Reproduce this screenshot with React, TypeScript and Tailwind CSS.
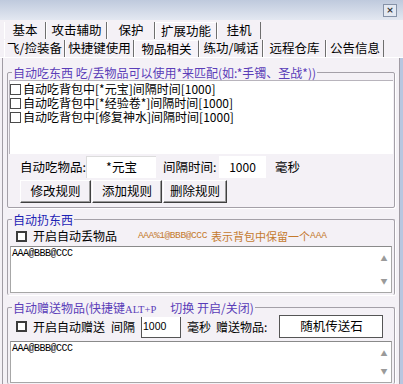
const font = "font-['SimSun','Noto_Sans_CJK_SC',sans-serif]";

type TabProps = { label: string; width: string; active?: boolean };

function Tab({ label, width, active }: TabProps) {
  return (
    <div
      className={`${width} h-full flex items-center justify-center border-l border-l-white border-r border-r-[#6e6e6e] ${
        active ? "bg-[#f6f3f8] -mt-[3px] h-[22px] border-t border-t-white" : ""
      }`}
    >
      <span className="text-[12.5px] leading-none text-black whitespace-nowrap">{label}</span>
    </div>
  );
}

function Check({ label }: { label: string }) {
  return (
    <div className="flex items-center gap-[2px] h-[14px]">
      <span className="w-[11px] h-[11px] border border-[#4a4a4a] bg-white" />
      <span className="text-[12px] leading-none whitespace-nowrap">{label}</span>
    </div>
  );
}

function Box() {
  return <span className="w-[11px] h-[11px] border-2 border-[#3c3c3c] bg-white shrink-0" />;
}

function Btn({ label, width }: { label: string; width: string }) {
  return (
    <button
      className={`${width} h-[23px] bg-[#f4f1f6] border border-t-white border-l-white border-r-[#404040] border-b-[#404040] shadow-[inset_-1px_-1px_0_#9a9a9a] text-[12.5px] leading-none`}
    >
      {label}
    </button>
  );
}

function TextArea({ h }: { h: string }) {
  return (
    <div className={`${h} mx-[2px] bg-white border border-[#a7a7a7] border-t-[#8a8a8a] flex`}>
      <div className="flex-1 px-[1px] pt-[2px] text-[10px] leading-none font-['Liberation_Mono',monospace] tracking-[-0.5px]">
        AAA@BBB@CCC
      </div>
      <div className="w-[14px] flex flex-col justify-between items-center py-[6px] text-[7px] text-[#9a9a9a]">
        <span>▲</span>
        <span>▼</span>
      </div>
    </div>
  );
}

function Group({
  title,
  color,
  className,
  children,
}: {
  title: React.ReactNode;
  color: string;
  className?: string;
  children: React.ReactNode;
}) {
  return (
    <div
      className={`relative mx-[4px] border border-[#a4a0a8] shadow-[1px_1px_0_white] rounded-[2px] ${className ?? ""}`}
    >
      <div
        className={`absolute -top-[8px] left-[4px] bg-[#f4f1f6] px-[1px] text-[12px] leading-[15px] whitespace-nowrap ${color}`}
      >
        {title}
      </div>
      {children}
    </div>
  );
}

export default function App() {
  return (
    <div
      className={`w-[403px] h-[384px] bg-[#f4f1f6] overflow-hidden flex flex-col ${font} text-black`}
    >
      <div className="h-[20px] shrink-0 bg-gradient-to-b from-[#bfcadd] to-[#e3e8f1] flex justify-end items-center pr-[6px]">
        <div className="w-[14px] h-[13px] border border-[#8592a8] bg-[#e4e9f2] flex items-center justify-center text-[9px] leading-none text-[#333] font-bold font-['DejaVu_Sans',sans-serif]">
          ×
        </div>
      </div>

      <div className="h-[19px] shrink-0 flex items-end pl-[4px]">
        <div className="flex h-[17px] items-end">
          <Tab label="基本" width="w-[42px]" />
          <Tab label="攻击辅助" width="w-[61px]" />
          <Tab label="保护" width="w-[48px]" />
          <Tab label="扩展功能" width="w-[62px]" active />
          <Tab label="挂机" width="w-[44px]" />
        </div>
      </div>
      <div className="h-[19px] shrink-0 flex items-end pl-[4px] border-b border-b-white">
        <div className="flex h-[17px] items-end">
          <Tab label="飞/捡装备" width="w-[61px]" />
          <Tab label="快捷键使用" width="w-[69px]" />
          <Tab label="物品相关" width="w-[65px]" active />
          <Tab label="练功/喊话" width="w-[64px]" />
          <Tab label="远程仓库" width="w-[63px]" />
          <Tab label="公告信息" width="w-[58px]" />
        </div>
      </div>

      <div className="flex-1 flex">
        <div className="flex-1 ml-[2px] border-l border-[#a09ca4] border-r pt-[14px] flex flex-col">
          <Group
            title="自动吃东西 吃/丢物品可以使用*来匹配(如:*手镯、圣战*))"
            color="text-[#5a3db8]"
            className="h-[136px]"
          >
            <div className="mt-[7px] mx-[1px] h-[74px] bg-white border-l border-t border-[#b8b4bc] pt-[1px]">
              <Check label="自动吃背包中[*元宝]间隔时间[1000]" />
              <Check label="自动吃背包中[*经验卷*]间隔时间[1000]" />
              <Check label="自动吃背包中[修复神水]间隔时间[1000]" />
            </div>
            <div className="flex items-center h-[26px] pl-[12px] text-[12.5px] whitespace-nowrap">
              <span className="w-[66px]">自动吃物品:</span>
              <div className="w-[70px] h-[22px] bg-white border-t border-l border-[#dcdcdc] flex items-center justify-center">
                *元宝
              </div>
              <span className="ml-[7px] w-[56px]">间隔时间:</span>
              <div className="w-[47px] h-[22px] bg-white flex items-center justify-center text-[12px]">
                1000
              </div>
              <span className="ml-[9px]">毫秒</span>
            </div>
            <div className="flex pl-[12px] gap-[1px]">
              <Btn label="修改规则" width="w-[71px]" />
              <Btn label="添加规则" width="w-[70px]" />
              <Btn label="删除规则" width="w-[64px]" />
            </div>
          </Group>

          <Group
            title="自动扔东西"
            color="text-[#1c22b4]"
            className="mt-[11px] h-[76px] border-b-0"
          >
            <div className="flex items-center h-[26px] pl-[8px] pt-[6px] whitespace-nowrap">
              <Box />
              <span className="ml-[6px] text-[12px] leading-none">开启自动丢物品</span>
              <span className="ml-[21px] text-[#c47a2e] text-[11px] leading-none flex items-center gap-[4px]">
                <span className="font-['Liberation_Mono',monospace] text-[9.5px] tracking-[-0.4px]">
                  AAA%1@BBB@CCC
                </span>
                <span>表示背包中保留一个</span>
                <span className="font-['Liberation_Mono',monospace] text-[9.5px] -ml-[4px]">AAA</span>
              </span>
            </div>
            <TextArea h="h-[47px]" />
          </Group>

          <Group
            title={
              <span>
                自动赠送物品(快捷键
                <span className="text-[10.5px] font-['Liberation_Serif',serif]">ALT+P</span>
                <span className="ml-[14px]">切换 开启/关闭)</span>
              </span>
            }
            color="text-[#5a3db8]"
            className="mt-[12px] flex-1 border-b-0"
          >
            <div className="flex items-center h-[31px] pl-[8px] pt-[6px] text-[12px] leading-none whitespace-nowrap">
              <Box />
              <span className="ml-[6px] shrink-0">开启自动赠送</span>
              <span className="ml-[6px] shrink-0">间隔</span>
              <div className="ml-[6px] shrink-0 w-[40px] h-[23px] bg-white border border-[#555] flex items-center pl-[1px] text-[10.5px] font-['Liberation_Sans',sans-serif]">
                1000
              </div>
              <span className="ml-[6px] shrink-0">毫秒</span>
              <span className="ml-[5px] shrink-0">赠送物品:</span>
              <div className="ml-[12px] shrink-0 w-[104px] h-[23px] bg-white border border-[#555] flex items-center justify-center text-[12.5px]">
                随机传送石
              </div>
            </div>
            <TextArea h="h-[42px] mt-[2px]" />
          </Group>
        </div>
        <div className="w-[3px] bg-[#b8c6e0]" />
      </div>
    </div>
  );
}
